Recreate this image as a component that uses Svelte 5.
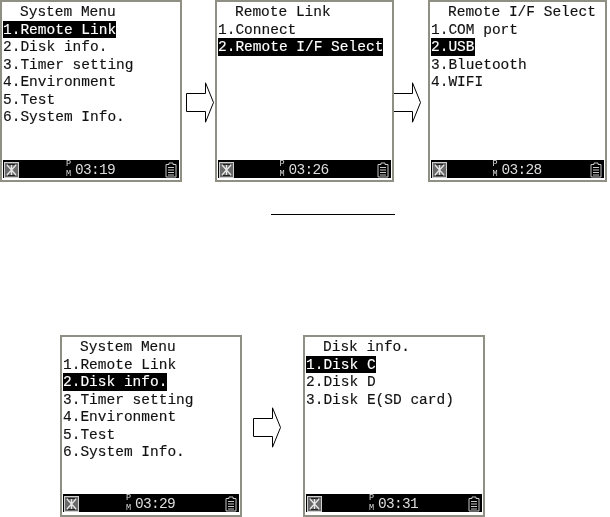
<script>
	const menu = ['Remote Link', 'Disk info.', 'Timer setting', 'Environment', 'Test', 'System Info.'];
	const screens = {
		main: { title: 'System Menu', items: menu, active: 0, time: '03:19' },
		link: { title: 'Remote Link', items: ['Connect', 'Remote I/F Select'], active: 1, time: '03:26' },
		iface: { title: 'Remote I/F Select', items: ['COM port', 'USB', 'Bluetooth', 'WIFI'], active: 1, time: '03:28' },
		disk: { title: 'System Menu', items: menu, active: 1, time: '03:29' },
		info: { title: 'Disk info.', items: ['Disk C', 'Disk D', 'Disk E(SD card)'], active: 0, time: '03:31' }
	};
</script>

{#snippet arrow(cls)}
	<svg class="arrow {cls}" width="28" height="41" viewBox="0 0 28 41">
		<path d="M0.5 11.5H19.5V0.8L27.5 20.5L19.5 40.2V29.5H0.5Z" fill="#fff" stroke="#000" />
	</svg>
{/snippet}

{#snippet screen(s, cls)}
	<div class="screen {cls}">
		<div class="list">
			<div class="title">{s.title}</div>
			{#each s.items as item, i}
				<div class="item"><span class:active={i === s.active}>{i + 1}.{item}</span></div>
			{/each}
		</div>
		<div class="status">
			<svg class="sig" width="15" height="16" viewBox="0 0 15 16">
				<rect x="0.5" y="0.5" width="14" height="15" fill="#6a6a6a" stroke="#d0d0d0" />
				<path d="M3 3L12 13M12 3L3 13M7.5 2V14" stroke="#e6e6e6" stroke-width="1.3" />
				<path d="M4 2.5H11M4 13.5H11" stroke="#222" />
			</svg>
			<div class="clock">
				<span class="ampm"><span>P</span><span>M</span></span>
				<span class="time">{s.time}</span>
			</div>
			<svg class="batt" width="12" height="16" viewBox="0 0 12 16">
				<path d="M4 1H8V2.5H11V15H1V2.5H4Z" fill="none" stroke="#c8c8c8" />
				<path d="M3 5.5H9M3 8H9M3 10.5H9M3 13H9" stroke="#c8c8c8" />
			</svg>
		</div>
	</div>
{/snippet}

<main>
	<div class="row first">
		{@render screen(screens.main, 'wide')}
		{@render arrow('a1')}
		{@render screen(screens.link, '')}
		{@render arrow('a2')}
		{@render screen(screens.iface, '')}
	</div>
	<div class="rule"></div>
	<div class="row second">
		{@render screen(screens.disk, 'wide')}
		{@render arrow('a3')}
		{@render screen(screens.info, 'wide')}
	</div>
</main>

<style>
	:global(body) {
		margin: 0;
		background: #fff;
	}
	main {
		width: 610px;
		height: 517px;
		overflow: hidden;
		font-family: "Liberation Mono", monospace;
	}
	.row {
		display: flex;
		align-items: flex-start;
	}
	.second {
		margin-top: 120px;
		padding-left: 60px;
	}
	.second .screen {
		padding-bottom: 3px;
	}
	.rule {
		width: 124px;
		height: 1px;
		margin: 32px 0 0 271px;
		background: #000;
	}
	.screen {
		width: 179px;
		height: 182px;
		flex: none;
		box-sizing: border-box;
		display: flex;
		flex-direction: column;
		justify-content: space-between;
		padding: 1px 1px 2px;
		background: #fff;
		border: 2px solid #8f8f84;
		filter: blur(0.4px);
	}
	.wide {
		width: 182px;
	}
	.title,
	.item {
		height: 17.5px;
		line-height: 19px;
		font-size: 14.5px;
		color: #111;
		white-space: pre;
		-webkit-text-stroke: 0.15px #111;
	}
	.title {
		padding-left: 17px;
	}
	.active {
		display: inline-block;
		height: 17.5px;
		vertical-align: top;
		background: #000;
		color: #fff;
		-webkit-text-stroke: 0.15px #fff;
	}
	.status {
		height: 18px;
		display: grid;
		grid-template-columns: 1fr auto 1fr;
		align-items: center;
		padding: 0 2px 0 1px;
		background: #000;
		color: #ddd;
	}
	.sig {
		justify-self: start;
	}
	.batt {
		justify-self: end;
	}
	.clock {
		display: flex;
		align-items: center;
		gap: 2px;
	}
	.ampm {
		display: flex;
		flex-direction: column;
		font-size: 8.5px;
		line-height: 9.6px;
		width: 7px;
	}
	.time {
		font-size: 14.5px;
		letter-spacing: -0.7px;
	}
	.arrow {
		flex: none;
	}
	.a1 {
		margin: 82px 1px 0 4px;
	}
	.a2 {
		margin: 82px 7px 0 -1px;
	}
	.a3 {
		margin: 72px 22px 0 11px;
	}
</style>
